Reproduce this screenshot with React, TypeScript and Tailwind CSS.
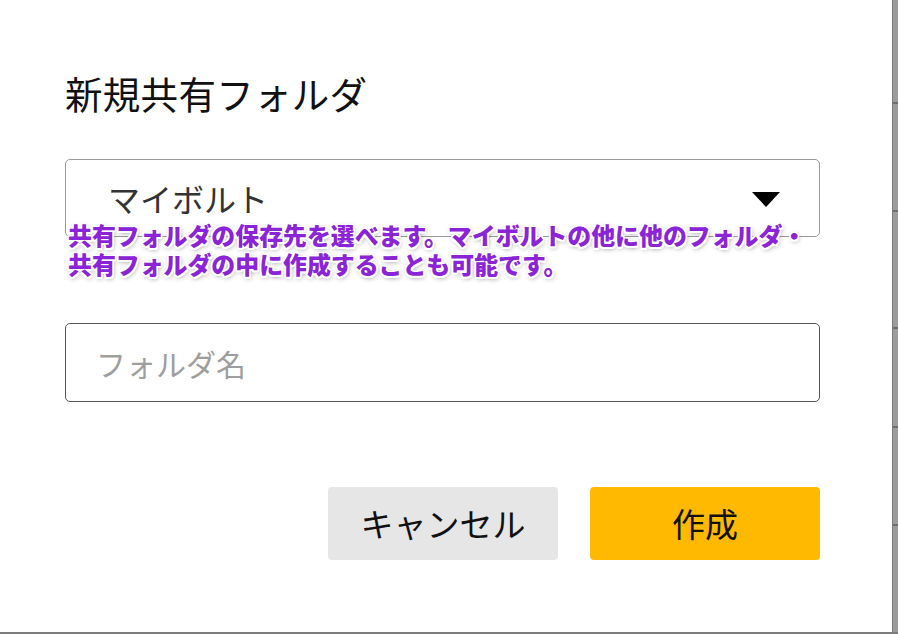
import React from "react";

const jp = { fontFamily: '"Noto Sans CJK JP", "Noto Sans", sans-serif' };

export default function App() {
  const outline =
    "0 0 2px #fff, 1.5px 0 0 #fff, -1.5px 0 0 #fff, 0 1.5px 0 #fff, 0 -1.5px 0 #fff, 1.5px 1.5px 0 #fff, -1.5px -1.5px 0 #fff, 1.5px -1.5px 0 #fff, -1.5px 1.5px 0 #fff, 1px 2px 5px rgba(0,0,0,0.45)";
  return (
    <div className="w-[898px] h-[634px] flex flex-col bg-[#8f8f8f] overflow-hidden" style={jp}>
      <div className="flex h-[632px]">
        <div className="relative w-[892px] h-[632px] bg-white flex flex-col pl-[65px] pr-[72px]">
          <div className="mt-[73px] h-[40px] text-[37.5px] leading-[40px] text-[#111] tracking-[0.3px]">新規共有フォルダ</div>
          <div className="mt-[46px] h-[78px] border-[1.5px] border-[#9a9a9a] rounded-[5px] flex items-center pl-[42px] pr-[39px]">
            <span className="flex-1 text-[32px] text-[#333] leading-none">マイボルト</span>
            <svg width="28" height="15" viewBox="0 0 28 15" className="mt-[2px]">
              <polygon points="0,0 28,0 14,15" fill="#000" />
            </svg>
          </div>
          <div className="mt-[86px] h-[79px] border-[1.5px] border-[#555] rounded-[5px] flex items-center pl-[30px]">
            <span className="text-[30px] text-[#9e9e9e] leading-none">フォルダ名</span>
          </div>
          <div className="mt-[85px] flex justify-end gap-[32px]">
            <div className="w-[230px] h-[73px] rounded-[4px] bg-[#e6e6e6] flex items-center justify-center text-[33px] text-[#111]">キャンセル</div>
            <div className="w-[230px] h-[73px] rounded-[4px] bg-[#ffb900] flex items-center justify-center text-[33px] text-[#111]">作成</div>
          </div>
          <div
            className="absolute left-[68px] top-[221px] text-[23.9px] leading-[28.5px] font-black text-[#8a24d6] whitespace-nowrap"
            style={{ textShadow: outline }}
          >
            <div>共有フォルダの保存先を選べます。マイボルトの他に他のフォルダ・</div>
            <div>共有フォルダの中に作成することも可能です。</div>
          </div>
        </div>
        <div className="w-[6px] h-[632px] flex flex-col border-l border-[#7c7c7c] bg-[#9c9c9c]">
          <div className="h-[102px]" />
          <div className="h-[2px] bg-[#6e6e6e]" />
          <div className="h-[106px]" />
          <div className="h-[2px] bg-[#6e6e6e]" />
          <div className="h-[115px]" />
          <div className="h-[2px] bg-[#6e6e6e]" />
          <div className="h-[97px]" />
          <div className="h-[2px] bg-[#6e6e6e]" />
          <div className="h-[96px]" />
          <div className="h-[2px] bg-[#6e6e6e]" />
        </div>
      </div>
      <div className="h-[2px] bg-[#7c7c7c]" />
    </div>
  );
}
